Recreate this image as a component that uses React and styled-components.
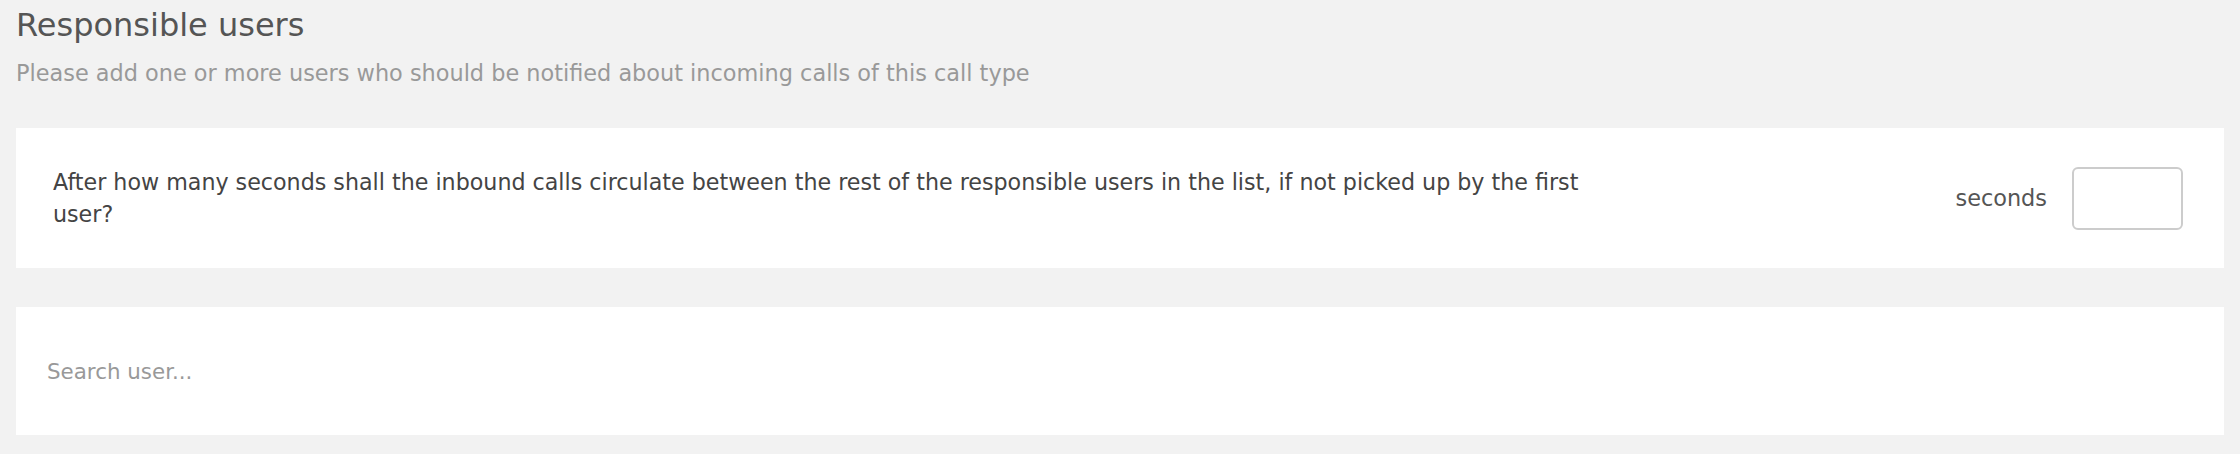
import React from "react";
import styled, { createGlobalStyle } from "styled-components";

const Global = createGlobalStyle`
  html, body { margin: 0; padding: 0; background: #f2f2f2; }
  body { font-family: "DejaVu Sans", Inter, sans-serif; }
  * { box-sizing: border-box; }
`;

const Page = styled.div`
  padding: 5px 16px 20px 16px;
  display: flex;
  flex-direction: column;
`;

const Header = styled.div`
  display: flex;
  flex-direction: column;
  margin-bottom: 41px;
`;

const Title = styled.h2`
  margin: 0;
  font-size: 32px;
  font-weight: 400;
  line-height: 40px;
  color: #555;
`;

const Subtitle = styled.p`
  margin: 14px 0 0 0;
  font-size: 22.4px;
  line-height: 28px;
  color: #999;
`;

const Card = styled.div`
  background: #fff;
  height: ${(p) => p.$h}px;
  margin-bottom: ${(p) => p.$mb || 0}px;
  display: flex;
  align-items: center;
  padding: ${(p) => p.$pad};
`;

const Question = styled.div`
  max-width: 1565px;
  font-size: 22.2px;
  line-height: 32px;
  color: #444;
`;

const Spacer = styled.div`
  flex: 1;
`;

const Unit = styled.span`
  font-size: 22.4px;
  color: #555;
  margin-right: 25px;
`;

const NumberBox = styled.input`
  width: 111px;
  height: 63px;
  border: 2px solid #ccc;
  border-radius: 6px;
  background: #fff;
  font-size: 20px;
  outline: none;
`;

const Search = styled.input`
  flex: 1;
  border: none;
  outline: none;
  background: transparent;
  font-family: inherit;
  font-size: 21.4px;
  color: #444;
  padding: 0;
  &::placeholder { color: #999; }
`;

export default function App() {
  return (
    <>
      <Global />
      <Page>
        <Header>
          <Title>Responsible users</Title>
          <Subtitle>
            Please add one or more users who should be notified about incoming calls of this call type
          </Subtitle>
        </Header>
        <Card $h={140} $mb={39} $pad="0 41px 0 37px">
          <Question>
            After how many seconds shall the inbound calls circulate between the rest of the responsible users in the list, if not picked up by the first user?
          </Question>
          <Spacer />
          <Unit>seconds</Unit>
          <NumberBox type="text" />
        </Card>
        <Card $h={128} $pad="0 32px 0 31px">
          <Search placeholder="Search user..." />
        </Card>
      </Page>
    </>
  );
}
